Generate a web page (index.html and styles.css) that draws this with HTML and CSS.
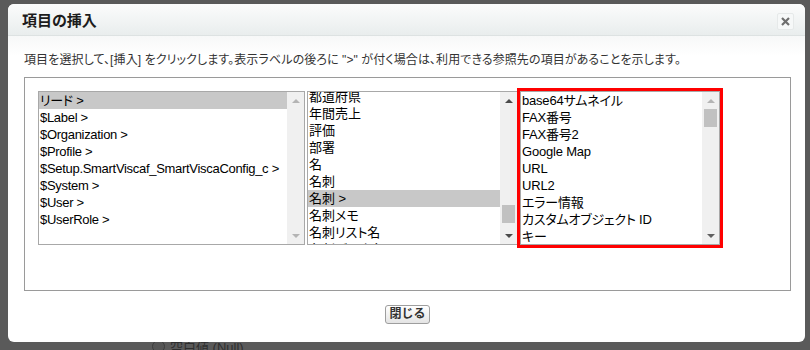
FILE: index.html
```html
<!DOCTYPE html>
<html lang="ja">
<head>
  <meta charset="UTF-8" />
  <meta name="viewport" content="width=device-width, initial-scale=1" />
  <title>項目の挿入</title>
  <link rel="stylesheet" href="styles.css">
</head>
<body>
  <div class="backdrop">
    <span class="bg-radio"></span><span class="bg-label">空白値 (Null)</span>
  </div>
  <div class="dialog">
    <div class="dialog-head">
      <h2>項目の挿入</h2>
      <button class="close" title="閉じる">
        <svg width="9" height="9" viewBox="0 0 9 9"><path d="M1 1 L8 8 M8 1 L1 8" stroke="#6e6e6e" stroke-width="2.2" /></svg>
      </button>
    </div>
    <div class="dialog-body">
      <p class="hint">項目を選択して、[挿入] をクリックします。表示ラベルの後ろに "&gt;" が付く場合は、利用できる参照先の項目があることを示します。</p>
      <div class="picker">
        <div class="list list-objects">
          <ul>
            <li class="sel">リード &gt;</li>
            <li>$Label &gt;</li>
            <li>$Organization &gt;</li>
            <li>$Profile &gt;</li>
            <li>$Setup.SmartViscaf_SmartViscaConfig_c &gt;</li>
            <li>$System &gt;</li>
            <li>$User &gt;</li>
            <li>$UserRole &gt;</li>
          </ul>
          <div class="scroll off">
            <span class="arrow up"></span>
            <span class="track"></span>
            <span class="arrow down"></span>
          </div>
        </div>
        <div class="list list-fields">
          <ul class="scrolled">
            <li>都道府県</li>
            <li>年間売上</li>
            <li>評価</li>
            <li>部署</li>
            <li>名</li>
            <li>名刺</li>
            <li class="sel">名刺 &gt;</li>
            <li>名刺メモ</li>
            <li>名刺リスト名</li>
            <li>名刺データ名</li>
          </ul>
          <div class="scroll">
            <span class="arrow up"></span>
            <span class="track"><span class="thumb" style="margin-top:96px"></span></span>
            <span class="arrow down"></span>
          </div>
        </div>
        <div class="list list-target">
          <ul>
            <li>base64サムネイル</li>
            <li>FAX番号</li>
            <li>FAX番号2</li>
            <li>Google Map</li>
            <li>URL</li>
            <li>URL2</li>
            <li>エラー情報</li>
            <li>カスタムオブジェクト ID</li>
            <li>キー</li>
          </ul>
          <div class="scroll at-top">
            <span class="arrow up"></span>
            <span class="track"><span class="thumb" style="margin-top:0"></span></span>
            <span class="arrow down"></span>
          </div>
        </div>
      </div>
      <div class="actions">
        <button class="btn">閉じる</button>
      </div>
    </div>
  </div>
</body>
</html>
```

FILE: styles.css
```css
body {
  margin: 0;
  height: 350px;
  overflow: hidden;
  background: #5a5a5a;
  font-family: "Liberation Sans", "Noto Sans CJK JP", sans-serif;
  font-feature-settings: "palt";
  color: #222;
}
.backdrop {
  position: absolute;
  left: 152px;
  top: 337px;
  display: flex;
  align-items: center;
  gap: 5px;
  font-size: 13px;
  color: #2e2e2e;
}
.bg-radio {
  width: 11px;
  height: 11px;
  border-radius: 50%;
  border: 1px solid #3c3c3c;
  background: #555;
}
.dialog {
  position: relative;
  margin: 4px 0 0 8px;
  width: 797px;
  height: 338px;
  background: #fff;
  border-radius: 6px;
  overflow: hidden;
}
.dialog-head {
  height: 31px;
  display: flex;
  align-items: center;
  justify-content: space-between;
  padding: 0 11px 0 14px;
  background: linear-gradient(#fbfcfc, #e9eded);
  border-bottom: 1px solid #dde2e2;
}
.dialog-head h2 {
  margin: 0;
  font-size: 15px;
  font-weight: bold;
  color: #1c1c1c;
}
.close {
  margin-top: 4px;
  width: 17px;
  height: 17px;
  padding: 0;
  display: flex;
  align-items: center;
  justify-content: center;
  border: 1px solid #e6e9e9;
  border-radius: 2px;
  background: #f6f8f8;
  cursor: pointer;
}
.dialog-body {
  padding: 16px 14px 0 16px;
  background: linear-gradient(#f7f8f8, #fff 20px);
}
.hint {
  margin: 0 0 9px 0;
  font-size: 12px;
  line-height: 16px;
  letter-spacing: 0.1px;
  color: #333;
  white-space: nowrap;
}
.picker {
  display: flex;
  border: 1px solid #9a9a9a;
  padding: 13px 0 45px 13px;
}
.list {
  display: flex;
  height: 154px;
  box-sizing: border-box;
  border: 1px solid #a8a8a8;
  background: #fff;
  overflow: hidden;
  font-size: 13px;
}
.list-objects {
  width: 267px;
  margin-right: 2px;
  letter-spacing: -0.3px;
}
.list-fields {
  width: 211px;
  margin-right: 2px;
}
.list-target {
  width: 200px;
  outline: 3px solid #ff0000;
  letter-spacing: -0.2px;
}
.list ul {
  flex: 1;
  margin: 0;
  padding: 0;
  list-style: none;
  overflow: hidden;
}
.list ul.scrolled {
  margin-top: -4px;
}
.list li {
  height: 17px;
  line-height: 17px;
  padding-left: 1px;
  white-space: nowrap;
  color: #000;
}
.list li.sel {
  background: #c8c8c8;
}
.scroll {
  width: 17px;
  flex: none;
  display: flex;
  flex-direction: column;
  background: #f0f0f0;
}
.arrow {
  height: 17px;
  flex: none;
  display: flex;
  align-items: center;
  justify-content: center;
}
.arrow::before {
  content: "";
  border-left: 4px solid transparent;
  border-right: 4px solid transparent;
}
.arrow.up::before {
  border-bottom: 4px solid #4a4a4a;
}
.arrow.down::before {
  border-top: 4px solid #4a4a4a;
}
.scroll.off .arrow.up::before,
.scroll.at-top .arrow.up::before {
  border-bottom-color: #b4b4b4;
}
.scroll.off .arrow.down::before {
  border-top-color: #b4b4b4;
}
.scroll.at-top .arrow.down::before {
  border-top-color: #606060;
}
.track {
  flex: 1;
  display: flex;
  flex-direction: column;
}
.thumb {
  height: 18px;
  margin: 0 2px;
  background: #c1c1c1;
}
.actions {
  display: flex;
  justify-content: center;
  padding-top: 14px;
}
.btn {
  height: 19px;
  padding: 0 3px;
  border: 1px solid #9e9e9e;
  border-radius: 3px;
  background: linear-gradient(#ffffff, #e4e4e4);
  font-family: inherit;
  font-size: 12px;
  font-weight: bold;
  line-height: 17px;
  color: #333;
  cursor: pointer;
}
```
